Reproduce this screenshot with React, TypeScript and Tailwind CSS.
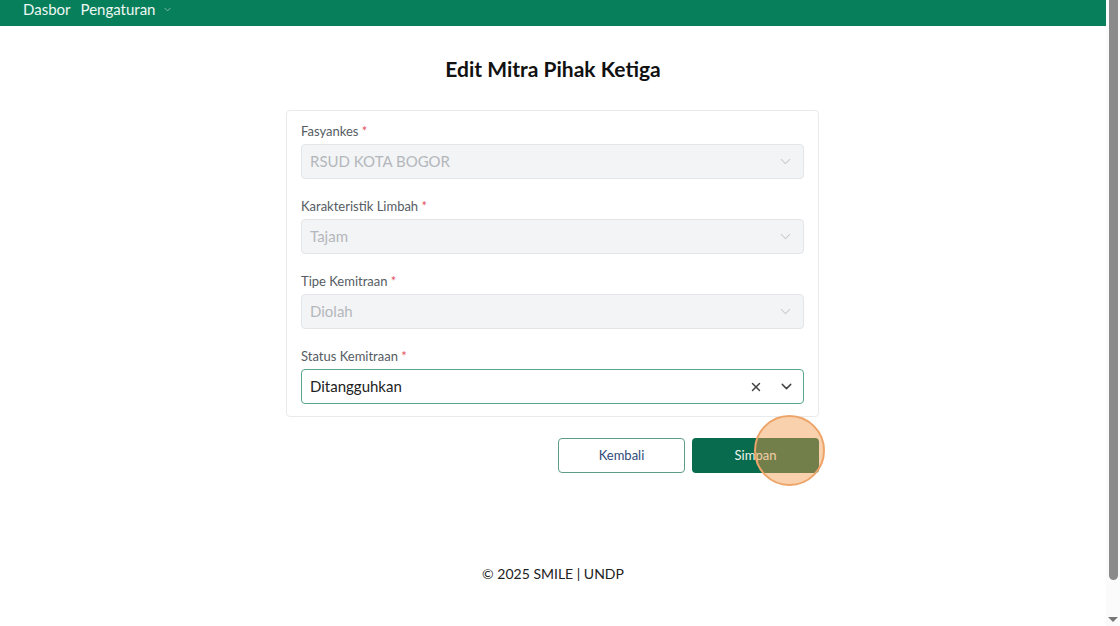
import { ChevronDown, X } from 'lucide-react'

const fields = [
  { label: 'Fasyankes', value: 'RSUD KOTA BOGOR' },
  { label: 'Karakteristik Limbah', value: 'Tajam' },
  { label: 'Tipe Kemitraan', value: 'Diolah' },
]

export default function App() {
  return (
    <div
      className="flex h-[626px] w-[1120px] overflow-hidden bg-white text-[#212529]"
      style={{ fontFamily: 'Lato, "Open Sans", sans-serif' }}
    >
      <div className="flex flex-1 flex-col">
        <nav className="flex h-[26px] items-center gap-[10px] bg-[#087f5b] pl-[23px] pb-[7px] text-[15px] text-[#eef8f3]">
          <span>Dasbor</span>
          <span className="flex items-center gap-[6px]">
            Pengaturan
            <ChevronDown size={11} strokeWidth={1.5} className="opacity-70" />
          </span>
        </nav>

        <h1 className="mt-[29px] text-center text-[21px] font-bold leading-[28px] text-[#111]">
          Edit Mitra Pihak Ketiga
        </h1>

        <div className="ml-[286px] mt-[27px] flex w-[533px] flex-col gap-[19px] rounded border border-[#e8eaec] px-[14px] pt-[12px] pb-[12px]">
          {fields.map((f) => (
            <div key={f.label} className="flex flex-col gap-[4px]">
              <label className="text-[13px] leading-[17px] text-[#555c63]">
                {f.label} <span className="text-[#e05260]">*</span>
              </label>
              <div className="flex h-[35px] items-center justify-between rounded border border-[#e3e5e8] bg-[#f3f4f6] pl-[8px] pr-[9px] text-[15px] text-[#b3b7bb]">
                <span>{f.value}</span>
                <ChevronDown size={17} strokeWidth={1.5} className="text-[#c9ccd0]" />
              </div>
            </div>
          ))}
          <div className="flex flex-col gap-[4px]">
            <label className="text-[13px] leading-[17px] text-[#555c63]">
              Status Kemitraan <span className="text-[#e05260]">*</span>
            </label>
            <div className="flex h-[35px] items-center justify-between rounded border border-[#58a68c] bg-white pl-[8px] pr-[8px] text-[15px] text-[#222]">
              <span>Ditangguhkan</span>
              <div className="flex items-center gap-[15px] text-[#444]">
                <X size={14} strokeWidth={2.5} />
                <ChevronDown size={17} strokeWidth={2} />
              </div>
            </div>
          </div>
        </div>

        <div className="ml-[286px] mt-[21px] flex w-[533px] justify-end gap-[7px]">
          <button className="h-[35px] w-[127px] rounded border border-[#5f9c87] bg-white text-[13px] text-[#2f4a7a]">
            Kembali
          </button>
          <div className="relative">
            <button className="h-[35px] w-[127px] rounded bg-[#086b4e] text-[13px] text-[#f1f5ef]">
              Simpan
            </button>
            <div className="absolute top-[-23px] left-[62px] h-[71px] w-[71px] rounded-full border-2 border-[#eda469] bg-[#f59a4a]/45" />
          </div>
        </div>

        <footer className="mt-[90px] text-center text-[14px] text-[#222]">© 2025 SMILE | UNDP</footer>
      </div>

      <div className="relative flex w-[14px] flex-col items-center bg-[#fbfbfb]">
        <div className="mx-auto h-[580px] w-[9px] rounded-b-full bg-[#8b8b8b]" />
        <div className="absolute bottom-[4px] h-0 w-0 border-x-[5px] border-t-[5px] border-x-transparent border-t-[#777]" />
      </div>
    </div>
  )
}
